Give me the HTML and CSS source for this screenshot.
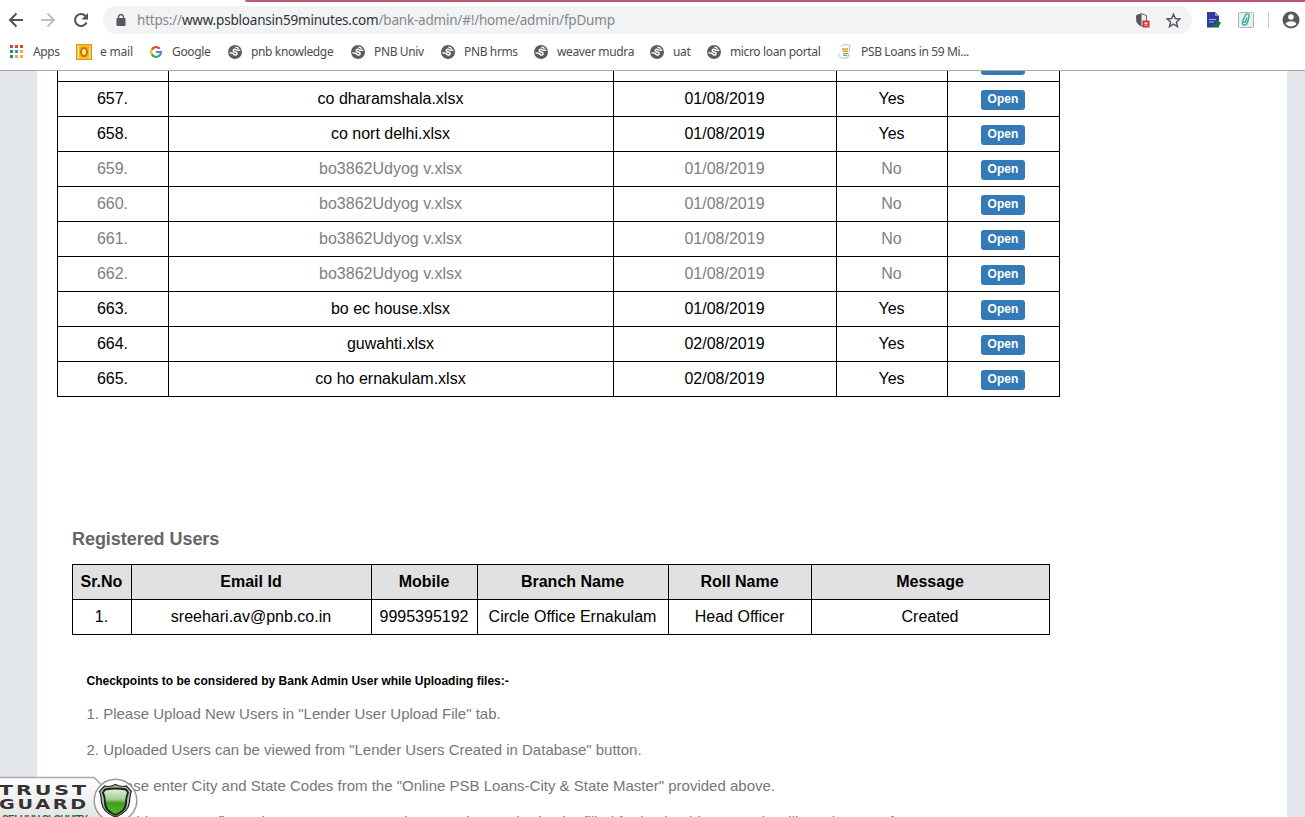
FILE: index.html
```
<!DOCTYPE html>
<html lang="en">
<head>
<meta charset="utf-8">
<title>Bank Admin</title>
<link rel="stylesheet" href="styles.css">
</head>
<body>
<svg width="0" height="0" class="defs">
  <symbol id="globe" viewBox="0 0 14 14"><circle cx="7" cy="7" r="7" fill="#5a5d61"/><path d="M12.300 5.200H9.200C8.300 5.200 8 4.300 7 4.200c-1.500-.1-2.300 1.300-1.300 2.200.9.800 2.800.2 3.300 1.500.5 1.500-.9 2.200-1.900 2.200-1.100 0-1.200-1.500-2.400-1.800-1.200-.3-2-.6-3.200-.6" fill="none" stroke="#fff" stroke-width="1.500"/><path d="M7.200 1.600c1.700 0 3.300.8 4.200 2.200L9.300 3.700C8.600 3.500 8 2.600 7.200 2.600z" fill="#fff"/></symbol>
</svg>
<header class="browser">
  <div class="tabline"></div>
  <div class="nav">
    <svg class="back" width="16" height="16" viewBox="0 0 16 16"><path d="M15 8H2.500M8.500 1.500 2 8l6.500 6.500" fill="none" stroke="#505357" stroke-width="2"/></svg>
    <svg class="forward" width="16" height="16" viewBox="0 0 16 16"><path d="M1 8h12.500M7.500 1.500 14 8l-6.500 6.500" fill="none" stroke="#bdbfc1" stroke-width="2"/></svg>
    <svg class="reload" width="16" height="16" viewBox="0 0 16 16"><path d="M13.500 10.500A6 6 0 1 1 12.500 4" fill="none" stroke="#505357" stroke-width="2.100"/><path d="M15 1v6.500H8.500z" fill="#505357"/></svg>
    <div class="address">
      <svg width="10" height="12" viewBox="0 0 10 12"><rect x=".5" y="4" width="9" height="8" rx="1" fill="#55585c"/><path d="M2.500 5V3a2.500 2.500 0 0 1 5 0v2" fill="none" stroke="#55585c" stroke-width="1.300"/></svg>
      <div class="url"><span class="dim">https://</span>www.psbloansin59minutes.com<span class="dim">/bank-admin/#!/home/admin/fpDump</span></div>
      <svg class="shield-icon" width="14" height="15" viewBox="0 0 14 15"><path d="M5.500.7 10.500 2.500v4c0 3.200-2.200 5.600-5 6.500-2.800-.9-5-3.300-5-6.500v-4z" fill="#eee" stroke="#666" stroke-width="1"/><path d="M5.500.5v12.500C2.500 12 .5 9.800.5 6.500v-4z" fill="#55585c"/><rect x="6.500" y="7.500" width="7" height="7" fill="#d3302f"/><path d="m8.500 9.500 3 3m0-3-3 3" stroke="#fff" stroke-width="1.100"/></svg>
      <svg class="star" width="15" height="15" viewBox="0 0 15 15"><path d="m7.500 1.300 1.800 4.300 4.600.4-3.500 3 1.100 4.600-4-2.500-4 2.500L4.600 9 1.100 6l4.600-.4z" fill="none" stroke="#55585c" stroke-width="1.500"/></svg>
    </div>
    <svg class="ext-doc" width="16" height="16" viewBox="0 0 16 16"><path d="M1 0h8l4 4v11.500H1z" fill="#303b9f"/><path d="M9 0v4h4z" fill="#8f96d5"/><path d="M3 7.500h7M3 10h5" stroke="#aab0e0" stroke-width="1"/><path d="M6.500 12h4V8.500l4.500 2-2.500 4.500h-6z" fill="#15743c"/></svg>
    <svg class="ext-clip" width="16" height="16" viewBox="0 0 16 16"><rect x=".5" y=".5" width="15" height="15" rx="1" fill="#e7eeee" stroke="#b0b5b5"/><path d="m5.500 7.500 2-4.500c1-2 4-1.300 3.700.8L9.500 10.500c-.5 2.500-4 3.800-5 1.500-.5-1.500 1.500-6 2.500-7.500m2 1L7.500 10c-.4 1.200-1.600.8-1.300-.3" fill="none" stroke="#22a493" stroke-width="1.200"/></svg>
    <span class="divider"></span>
    <svg class="person" width="18" height="18" viewBox="0 0 18 18"><circle cx="9" cy="9" r="8.500" fill="#55585c"/><circle cx="9" cy="6" r="2.800" fill="#fff"/><path d="M3.600 13c.5-3.800 10.300-3.800 10.800 0-2.500 3.300-8.300 3.300-10.800 0z" fill="#fff"/></svg>
  </div>
  <nav class="bookmarks">
    <div class="bm b-apps"><svg width="14" height="14" viewBox="0 0 14 14"><path d="M0 0h3v3H0zM5 0h3v3H5zM10 0h3v3h-3z" fill="#dc4437"/><path d="M0 5h3v3H0zM0 10h3v3H0z" fill="#239a56"/><path d="M5 5h3v3H5z" fill="#4285f4"/><path d="M5 10h3v3H5zM10 5h3v3h-3zM10 10h3v3h-3z" fill="#e8b13c"/></svg><span>Apps</span></div>
    <div class="bm b-mail"><svg width="16" height="16" viewBox="0 0 16 16"><rect x=".5" y=".5" width="15" height="15" fill="#f5c33b" stroke="#d69a20"/><path d="M2 2h9l3 3v9H2z" fill="#fff1a6"/><rect x="3" y="2" width="10" height="12" fill="#f6b51b"/><ellipse cx="8" cy="8" rx="3" ry="4" fill="#ffe88b" stroke="#c9730b" stroke-width="2"/></svg><span>e mail</span></div>
    <div class="bm b-google"><svg width="12" height="12" viewBox="0 0 12 12" fill="none" stroke-width="2.200"><path d="M9.700 2.700A5 5 0 0 0 1.800 3.600" stroke="#e94235"/><path d="M1.800 3.600a5 5 0 0 0 0 4.800" stroke="#f9bb05"/><path d="M1.800 8.400a5 5 0 0 0 7.500 1.300" stroke="#34a853"/><path d="M9.300 9.700A4.800 4.800 0 0 0 10.900 6H6" stroke="#4285f4"/></svg><span>Google</span></div>
    <div class="bm b-know"><svg width="14" height="14"><use href="#globe"/></svg><span>pnb knowledge</span></div>
    <div class="bm b-univ"><svg width="14" height="14"><use href="#globe"/></svg><span>PNB Univ</span></div>
    <div class="bm b-hrms"><svg width="14" height="14"><use href="#globe"/></svg><span>PNB hrms</span></div>
    <div class="bm b-weaver"><svg width="14" height="14"><use href="#globe"/></svg><span>weaver mudra</span></div>
    <div class="bm b-uat"><svg width="14" height="14"><use href="#globe"/></svg><span>uat</span></div>
    <div class="bm b-micro"><svg width="14" height="14"><use href="#globe"/></svg><span>micro loan portal</span></div>
    <div class="bm b-psb"><svg width="14" height="16" viewBox="0 0 14 16"><path d="M3 2.500c3-2.500 7-2 9-1l-1 7M1 10c0 4 4 5 9 3.500l1-4" fill="none" stroke="#9acba4"/><path d="M4 5h6M4.500 7.300h5.500" stroke="#e9923c" stroke-width="1.600"/><path d="M5 9.500h5M5 11.300h4" stroke="#72ad68" stroke-width="1.200"/></svg><span>PSB Loans in 59 Mi...</span></div>
  </nav>
</header>
<main class="viewport">
  <div class="sheet">
    <table class="files">
      <colgroup><col class="f1"><col class="f2"><col class="f3"><col class="f4"><col class="f5"></colgroup>
      <tbody>
      <tr><td></td><td></td><td></td><td></td><td><button aria-label="Open"></button></td></tr>
      <tr><td>657.</td><td>co dharamshala.xlsx</td><td>01/08/2019</td><td>Yes</td><td><button>Open</button></td></tr>
      <tr><td>658.</td><td>co nort delhi.xlsx</td><td>01/08/2019</td><td>Yes</td><td><button>Open</button></td></tr>
      <tr class="off"><td>659.</td><td>bo3862Udyog v.xlsx</td><td>01/08/2019</td><td>No</td><td><button>Open</button></td></tr>
      <tr class="off"><td>660.</td><td>bo3862Udyog v.xlsx</td><td>01/08/2019</td><td>No</td><td><button>Open</button></td></tr>
      <tr class="off"><td>661.</td><td>bo3862Udyog v.xlsx</td><td>01/08/2019</td><td>No</td><td><button>Open</button></td></tr>
      <tr class="off"><td>662.</td><td>bo3862Udyog v.xlsx</td><td>01/08/2019</td><td>No</td><td><button>Open</button></td></tr>
      <tr><td>663.</td><td>bo ec house.xlsx</td><td>01/08/2019</td><td>Yes</td><td><button>Open</button></td></tr>
      <tr><td>664.</td><td>guwahti.xlsx</td><td>02/08/2019</td><td>Yes</td><td><button>Open</button></td></tr>
      <tr><td>665.</td><td>co ho ernakulam.xlsx</td><td>02/08/2019</td><td>Yes</td><td><button>Open</button></td></tr>
      </tbody>
    </table>
    <h2>Registered Users</h2>
    <table class="users">
      <colgroup><col class="u1"><col class="u2"><col class="u3"><col class="u4"><col class="u5"><col class="u6"></colgroup>
      <thead><tr><th>Sr.No</th><th>Email Id</th><th>Mobile</th><th>Branch Name</th><th>Roll Name</th><th>Message</th></tr></thead>
      <tbody><tr><td>1.</td><td>sreehari.av@pnb.co.in</td><td>9995395192</td><td>Circle Office Ernakulam</td><td>Head Officer</td><td>Created</td></tr></tbody>
    </table>
    <section class="notes">
      <h3>Checkpoints to be considered by Bank Admin User while Uploading files:-</h3>
      <p>1. Please Upload New Users in "Lender User Upload File" tab.</p>
      <p>2. Uploaded Users can be viewed from "Lender Users Created in Database" button.</p>
      <p>3. Please enter City and State Codes from the "Online PSB Loans-City &amp; State Master" provided above.</p>
      <p>4. All address must first column "ID" was second area code, required to be filled for back address. Code will send correct format.</p>
    </section>
  </div>
  <div class="trust">
    <svg width="138" height="41" viewBox="0 0 138 41">
      <defs>
        <linearGradient id="plate" x2="0" y2="1"><stop stop-color="#fff"/><stop offset="1" stop-color="#e4e4e4"/></linearGradient>
        <linearGradient id="green" x2="0" y2="1"><stop stop-color="#e2f0dc"/><stop offset=".4" stop-color="#a5cf95"/><stop offset=".55" stop-color="#3f9c22"/><stop offset="1" stop-color="#4fc41c"/></linearGradient>
      </defs>
      <path d="M-1 1.500h95l10 10V42H-1z" fill="url(#plate)" stroke="#aaa" stroke-width="1.500"/>
      <circle cx="115.500" cy="24.500" r="21.300" fill="#fff" stroke="#999" stroke-width="1.500"/>
      <path d="M115.500 8.500c4 2 7.500 2.500 11 1.500l5 5.500c-2 3-1.500 6-2 10.500-.8 8-6 12-14 15-8-3-13.200-7-14-15-.5-4.500 0-7.500-2-10.500l5-5.500c3.500 1 7 .5 11-1.500z" fill="#b8b8bc" stroke="#222" stroke-width="1.200"/>
      <path d="M105 13.500q10.500-2 21 0l2 3q-2 5-2 10c0 6.500-4 9.500-10.500 12.500-6.500-3-10.500-6-10.500-12.500q0-5-2-10z" fill="url(#green)" stroke="#14240f" stroke-width="1.900"/>
      <g class="brand"><text x="-1" y="18.500" textLength="90" lengthAdjust="spacingAndGlyphs">TRUST</text><text x="-1" y="33" textLength="90" lengthAdjust="spacingAndGlyphs">GUARD</text></g>
      <text class="tag" x="2" y="46.500" textLength="86">SELHHH SLCHHITY</text>
    </svg>
  </div>
</main>
</body>
</html>
```
FILE: styles.css
```
* { box-sizing: border-box; }
body { margin: 0; height: 817px; overflow: hidden; background: #fff; font-family: "Liberation Sans", Arial, sans-serif; color: #000; display: flex; flex-direction: column; }
svg { display: block; flex: none; }
.defs { position: absolute; }
.browser { flex: none; height: 71px; border-bottom: 1px solid #a9a9ab; font-family: "Noto Sans", sans-serif; background: #fff; }
.tabline { height: 2px; margin-left: 245px; background: #c05672; border-bottom-left-radius: 3px; }
.nav { height: 36px; display: flex; align-items: center; padding-left: 8px; }
.forward { margin-left: 16px; }
.reload { margin-left: 17px; }
.address { display: flex; align-items: center; width: 1089px; height: 28px; margin-left: 14px; padding: 0 11px 0 13px; border-radius: 14px; background: #f1f3f4; }
.url { margin-left: 11px; flex: 1; font-size: 13.5px; letter-spacing: -.2px; white-space: nowrap; color: #303236; }
.dim { color: #85888c; }
.star { margin-left: 16px; }
.ext-doc { margin-left: 14px; }
.ext-clip { margin-left: 16px; }
.divider { width: 1px; height: 16px; margin-left: 14px; background: #ccc; }
.person { margin-left: 13px; }
.bookmarks { display: flex; height: 27px; padding-left: 10px; font-size: 12px; letter-spacing: -.36px; color: #4a4c50; }
.bm { display: flex; align-items: center; flex: none; white-space: nowrap; }
.b-apps { width: 66px; gap: 9px; }
.b-mail { width: 74px; gap: 8px; letter-spacing: -.2px; }
.b-google { width: 78px; gap: 10px; }
.b-know { width: 123px; gap: 9px; }
.b-univ { width: 90px; gap: 9px; }
.b-hrms { width: 93px; gap: 9px; }
.b-weaver { width: 116px; gap: 9px; }
.b-uat { width: 57px; gap: 9px; }
.b-micro { width: 131px; gap: 9px; }
.b-psb { gap: 9px; }
.viewport { position: relative; flex: 1; overflow: hidden; padding: 0 18px 0 37px; background: #e4e8ec; }
.sheet { width: 1250px; height: 746px; overflow: hidden; padding-left: 20px; background: #fff; }
table { table-layout: fixed; border-collapse: separate; border-spacing: 0; font-size: 16px; }
td, th { height: 35px; padding: 0 1px 0 0; text-align: center; vertical-align: middle; border: solid #000; border-width: 0 1px 1px 0; line-height: 34px; white-space: nowrap; }
td:first-child, th:first-child { border-left-width: 1px; }
.files { width: 1003px; margin-top: -24px; }
.f1 { width: 112px; } .f2 { width: 445px; } .f3 { width: 223px; } .f4 { width: 111px; } .f5 { width: 112px; }
.off td { color: #808080; }
button { display: block; width: 44px; height: 20px; margin: 1px auto 0; padding: 0 0 2px; border: 0; border-radius: 3px; background: #337ab7; color: #fff; font: bold 12px/18px "Liberation Sans", Arial, sans-serif; letter-spacing: .1px; }
h2 { margin: 131px 0 0 15px; font-size: 18px; line-height: 22px; letter-spacing: -.05px; color: #666; }
.users { width: 978px; margin: 14px 0 0 15px; }
.users th { border-top-width: 1px; height: 36px; background: #e1e1e1; }
.u1 { width: 60px; } .u2 { width: 240px; } .u3 { width: 106px; } .u4 { width: 191px; } .u5 { width: 143px; } .u6 { width: 238px; }
.notes { margin: 36px 0 0 29.500px; }
h3 { margin: 0 0 8px; font-size: 12px; line-height: 20px; }
p { margin: 0 0 16px; font-size: 15px; line-height: 20px; color: #777; white-space: nowrap; }
.notes p:first-of-type { padding-top: 5px; }
.trust { position: absolute; left: 0; bottom: 0; }
.brand { font: bold 14px "DejaVu Sans", sans-serif; letter-spacing: 2px; fill: #333; }
.tag { font: bold 10px "Liberation Sans", sans-serif; fill: #187030; }
```
